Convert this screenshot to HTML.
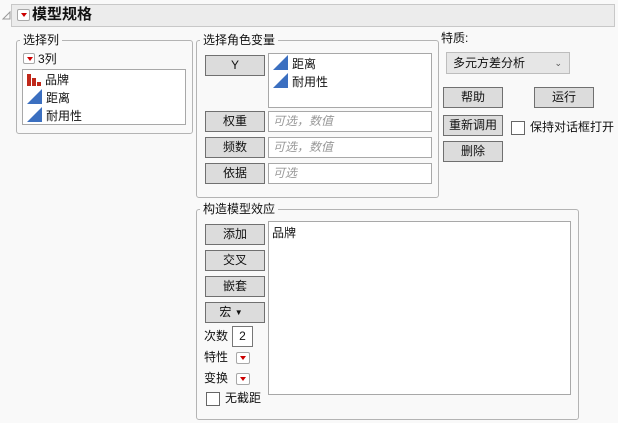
<!DOCTYPE html>
<html><head><meta charset="utf-8"><style>
*{box-sizing:border-box;margin:0;padding:0}
body{width:618px;height:423px;background:#f9f9f9;font-family:"Liberation Sans","Noto Sans CJK SC",sans-serif;font-size:12px;color:#111;position:relative;overflow:hidden}
.a{position:absolute;white-space:nowrap}
.grp{position:absolute;border:1px solid #b4b4b4;border-radius:3px}
.lbl{position:absolute;background:#f9f9f9;padding:0 3px;font-size:12px;line-height:14px;white-space:nowrap}
.btn{position:absolute;background:#dcdcdc;border:1px solid #707070;text-align:center;font-size:12px;line-height:18px;white-space:nowrap}
.box{position:absolute;background:#fff;border:1px solid #a8a8a8;white-space:nowrap}
.ph{color:#999;font-style:italic;font-size:12px;padding-left:4px;line-height:18px}
.rd{position:absolute;width:14px;height:12px;border:1px solid #a8a8a8;background:#fff;border-radius:2px}
.rd:after{content:"";position:absolute;left:3px;top:3px;border-left:3.5px solid transparent;border-right:3.5px solid transparent;border-top:4px solid #c00}
.tri{display:inline-block;width:0;height:0;border-left:15px solid transparent;border-bottom:15px solid #3b6fc0;vertical-align:-2px;margin-right:4px}
.bar{display:inline-block;vertical-align:-2px;margin-right:4px;width:14px;height:13px;position:relative}
.cb{position:absolute;width:13px;height:13px;border:1px solid #555;background:#fff}
</style></head><body>
<svg class="a" style="left:2px;top:10px" width="10" height="10"><path d="M1 9 L8 2 L8 9 Z" fill="none" stroke="#999" stroke-width="1"/></svg>
<div class="a" style="left:11px;top:4px;width:604px;height:23px;background:#ececec;border:1px solid #c8c8c8"></div>
<div class="rd" style="left:17px;top:9px;width:13px;height:12px"></div>
<div class="a" style="left:32px;top:5px;font-size:15px;font-weight:bold;line-height:20px">模型规格</div>

<div class="grp" style="left:16px;top:40px;width:177px;height:94px"></div>
<div class="lbl" style="left:20px;top:33px">选择列</div>
<div class="rd" style="left:23px;top:53px;width:12px;height:11px"></div>
<div class="a" style="left:38px;top:52px;line-height:14px">3列</div>
<div class="box" style="left:22px;top:69px;width:164px;height:56px"></div>
<div class="a" style="left:27px;top:72px;line-height:16px">
<div><span class="bar"><i class="a" style="left:0;top:1px;width:4px;height:12px;background:#c0281a"></i><i class="a" style="left:5px;top:5px;width:4px;height:8px;background:#c0281a"></i><i class="a" style="left:10px;top:9px;width:4px;height:4px;background:#c0281a"></i></span>品牌</div>
<div style="margin-top:1px"><span class="tri"></span>距离</div>
<div style="margin-top:1px"><span class="tri"></span>耐用性</div>
</div>

<div class="grp" style="left:196px;top:40px;width:243px;height:158px"></div>
<div class="lbl" style="left:200px;top:33px">选择角色变量</div>
<div class="btn" style="left:205px;top:55px;width:60px;height:21px">Y</div>
<div class="box" style="left:268px;top:53px;width:164px;height:55px"></div>
<div class="a" style="left:273px;top:55px;line-height:17px"><div><span class="tri"></span>距离</div><div><span class="tri"></span>耐用性</div></div>
<div class="btn" style="left:205px;top:111px;width:60px;height:21px">权重</div>
<div class="box ph" style="left:268px;top:111px;width:164px;height:21px">可选，数值</div>
<div class="btn" style="left:205px;top:137px;width:60px;height:21px">频数</div>
<div class="box ph" style="left:268px;top:137px;width:164px;height:21px">可选，数值</div>
<div class="btn" style="left:205px;top:163px;width:60px;height:21px">依据</div>
<div class="box ph" style="left:268px;top:163px;width:164px;height:21px">可选</div>

<div class="a" style="left:441px;top:31px;line-height:14px">特质:</div>
<div class="a" style="left:446px;top:52px;width:124px;height:22px;background:#e6e6e6;border:1px solid #bdbdbd;line-height:20px;padding-left:6px">多元方差分析<span class="a" style="right:7px;top:0;font-size:9px;color:#555">⌄</span></div>
<div class="btn" style="left:443px;top:87px;width:60px;height:21px">帮助</div>
<div class="btn" style="left:534px;top:87px;width:60px;height:21px">运行</div>
<div class="btn" style="left:443px;top:115px;width:60px;height:21px">重新调用</div>
<div class="cb" style="left:511px;top:121px;width:14px;height:14px;border-color:#666"></div>
<div class="a" style="left:530px;top:119px;line-height:16px">保持对话框打开</div>
<div class="btn" style="left:443px;top:141px;width:60px;height:21px">删除</div>

<div class="grp" style="left:196px;top:209px;width:383px;height:211px"></div>
<div class="lbl" style="left:200px;top:202px">构造模型效应</div>
<div class="btn" style="left:205px;top:224px;width:60px;height:21px">添加</div>
<div class="btn" style="left:205px;top:250px;width:60px;height:21px">交叉</div>
<div class="btn" style="left:205px;top:276px;width:60px;height:21px">嵌套</div>
<div class="btn" style="left:205px;top:302px;width:60px;height:21px;padding-right:8px">宏 <span style="font-size:8px;position:relative;top:-1px">▼</span></div>
<div class="a" style="left:204px;top:328px;line-height:16px">次数</div>
<div class="box" style="left:232px;top:326px;width:21px;height:21px;border-color:#777;text-align:center;line-height:18px">2</div>
<div class="a" style="left:204px;top:349px;line-height:16px">特性</div>
<div class="rd" style="left:236px;top:352px"></div>
<div class="a" style="left:204px;top:370px;line-height:16px">变换</div>
<div class="rd" style="left:236px;top:373px"></div>
<div class="cb" style="left:206px;top:392px;width:14px;height:14px;border-color:#666"></div>
<div class="a" style="left:225px;top:390px;line-height:16px">无截距</div>
<div class="box" style="left:268px;top:221px;width:303px;height:174px"></div>
<div class="a" style="left:272px;top:225px;line-height:16px">品牌</div>
</body></html>
